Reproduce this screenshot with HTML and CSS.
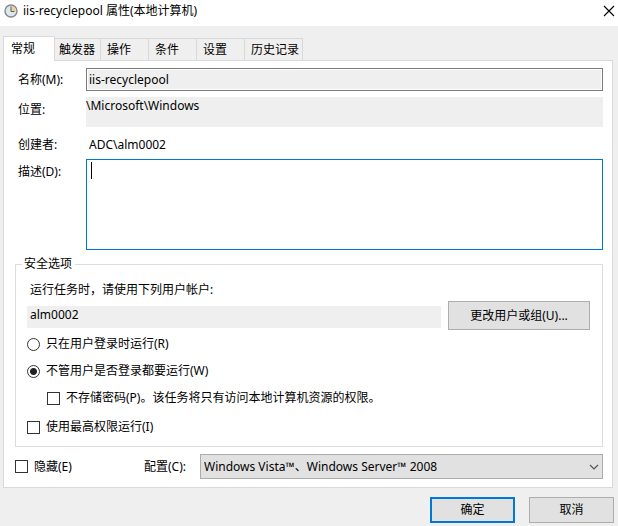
FILE: index.html
```
<!DOCTYPE html>
<html lang="zh-CN">
<head>
    <meta charset="UTF-8">
    <meta name="viewport" content="width=device-width, initial-scale=1.0">
    <title>iis-recyclepool 属性(本地计算机)</title>
    <link rel="stylesheet" href="styles.css">
</head>
<body>
    <header class="titlebar">
        <svg class="clock" width="14" height="14" viewBox="0 0 14 14">
            <circle cx="7" cy="7" r="6" fill="#dce8f0" stroke="#85898d" stroke-width="1.4"/>
            <path d="M7 7V2a5 5 0 0 1 5 5z" fill="#f5cf8c"/>
            <path d="M7 2.5V7.5H10.5" fill="none" stroke="#55606a"/>
        </svg>
        <h1>iis-recyclepool 属性(本地计算机)</h1>
        <button class="close" type="button" aria-label="关闭">
            <svg width="12" height="12" viewBox="0 0 12 12">
                <path d="M1 1L11 11M11 1L1 11" stroke="#000" stroke-width="1.1"/>
            </svg>
        </button>
    </header>

    <form class="dialog">
        <nav class="tabs">
            <button class="tab active" type="button">常规</button>
            <button class="tab" type="button">触发器</button>
            <button class="tab" type="button">操作</button>
            <button class="tab" type="button">条件</button>
            <button class="tab" type="button">设置</button>
            <button class="tab" type="button">历史记录</button>
        </nav>

        <div class="panel">
            <div class="fields">
                <label for="name">名称(M):</label>
                <input class="name" id="name" type="text" value="iis-recyclepool" readonly>

                <label class="top" for="location">位置:</label>
                <output class="location" id="location">\Microsoft\Windows</output>

                <label class="author-label" for="author">创建者:</label>
                <output class="author" id="author">ADC\alm0002</output>

                <label class="top" for="description">描述(D):</label>
                <div class="description">
                    <textarea id="description"></textarea>
                </div>
            </div>

            <fieldset class="security">
                <legend>安全选项</legend>
                <label class="account-label" for="account">运行任务时，请使用下列用户帐户:</label>
                <div class="account-row">
                    <output class="account" id="account">alm0002</output>
                    <button class="btn btn-change" type="button">更改用户或组(U)...</button>
                </div>
                <div class="options">
                    <label class="option"><input type="radio" name="run">只在用户登录时运行(R)</label>
                    <label class="option"><input type="radio" name="run" checked>不管用户是否登录都要运行(W)</label>
                    <label class="option nested"><input type="checkbox">不存储密码(P)。该任务将只有访问本地计算机资源的权限。</label>
                    <label class="option"><input type="checkbox">使用最高权限运行(I)</label>
                </div>
            </fieldset>

            <div class="config">
                <label class="option hidden-task"><input type="checkbox">隐藏(E)</label>
                <label class="config-label" for="config">配置(C):</label>
                <div class="select">
                    <select id="config">
                        <option>Windows Vista™、Windows Server™ 2008</option>
                    </select>
                    <svg class="arrow" width="10" height="6" viewBox="0 0 10 6">
                        <path d="M1 1L5 5L9 1" fill="none" stroke="#555" stroke-width="1.2"/>
                    </svg>
                </div>
            </div>
        </div>

        <footer class="actions">
            <button class="btn btn-default" type="submit">确定</button>
            <button class="btn" type="button">取消</button>
        </footer>
    </form>
</body>
</html>
```
FILE: styles.css
```
* {
    box-sizing: border-box;
}

body {
    margin: 0;
    background-color: #efefef;
    color: #000;
    font-family: "Noto Sans", "Noto Sans CJK SC", sans-serif;
    font-size: 12px;
    line-height: 16px;
}

button, input, textarea, select {
    font: inherit;
    color: inherit;
    margin: 0;
    border-radius: 0;
}

/* Title bar */
.titlebar {
    display: flex;
    align-items: center;
    height: 26px;
    padding: 0 3px 4px 4px;
    background-color: #fff;
}

.titlebar h1 {
    flex: 1;
    margin: 0 0 0 5px;
    font-size: 12px;
    font-weight: normal;
}

.close {
    display: flex;
    padding: 0;
    border: none;
    background: none;
}

/* Tabs */
.dialog {
    padding: 10px 5px 3px 3px;
}

.tabs {
    display: flex;
    align-items: flex-end;
}

.tab {
    height: 22px;
    min-width: 48px;
    padding: 0 3px 0 6px;
    border: 1px solid #d9d9d9;
    border-width: 1px 1px 0 0;
    background-color: #efefef;
    text-align: left;
}

.tab:nth-child(2) {
    min-width: 46px;
    padding-left: 4px;
}

.tab.active {
    position: relative;
    height: 25px;
    min-width: 52px;
    margin-bottom: -1px;
    padding-left: 7px;
    border-left-width: 1px;
    background-color: #fff;
}

.panel {
    padding: 7px 9px 8px 11px;
    border: 1px solid #d9d9d9;
    background-color: #fff;
}

/* General fields */
.fields {
    display: grid;
    grid-template-columns: 68px 1fr;
    row-gap: 6px;
    align-items: center;
    padding-left: 3px;
}

.fields .top {
    align-self: start;
    padding-top: 5px;
}

.name {
    width: 100%;
    height: 23px;
    padding: 0 2px;
    border: 1px solid #7a7a7a;
    outline: none;
    background-color: #efefef;
    box-shadow: inset 0 0 0 1px #fff;
}

.location {
    height: 30px;
    padding-top: 1px;
    background-color: #efefef;
}

.author-label,
.author {
    padding-top: 4px;
}

.author {
    padding-left: 3px;
}

.description {
    position: relative;
}

.description textarea {
    display: block;
    width: 100%;
    height: 91px;
    padding: 2px 4px;
    border: 1px solid #0078d7;
    outline: none;
    resize: none;
    caret-color: transparent;
}

/* Text cursor */
.description::before {
    content: "";
    position: absolute;
    top: 3px;
    left: 5px;
    width: 1px;
    height: 17px;
    background-color: #000;
}

/* Security options */
.security {
    min-width: 0;
    margin: 6px 0 0;
    padding: 10px 12px 11px 11px;
    border: 1px solid #dcdcdc;
}

.security legend {
    margin-left: -5px;
    padding: 0 3px 0 2px;
}

.account-label {
    display: block;
    padding-left: 3px;
}

.account-row {
    display: flex;
    align-items: flex-end;
    gap: 7px;
    margin-top: 3px;
}

.account {
    flex: 1;
    height: 22px;
    margin-bottom: 2px;
    padding: 1px 0 0 3px;
    background-color: #efefef;
}

.options {
    display: flex;
    flex-direction: column;
    align-items: flex-start;
    gap: 11px;
    margin-top: 6px;
}

.option {
    display: flex;
    align-items: center;
    gap: 6px;
}

.option.nested {
    margin-left: 20px;
    margin-bottom: 2px;
}

.option input {
    appearance: none;
    flex: none;
    width: 13px;
    height: 13px;
    border: 1px solid #333;
    background-color: #fff;
}

.option input[type="radio"] {
    border-radius: 50%;
}

.option input[type="radio"]:checked {
    background: radial-gradient(circle, #222 3px, #fff 4px);
}

.config {
    display: flex;
    align-items: center;
    margin-top: 7px;
}

.hidden-task {
    width: 129px;
}

.config-label {
    width: 56px;
}

.select {
    flex: 1;
    position: relative;
}

.select select {
    appearance: none;
    display: block;
    width: 100%;
    height: 25px;
    padding: 0 20px 0 3px;
    border: 1px solid #adadad;
    background-color: #e1e1e1;
}

.arrow {
    position: absolute;
    top: 10px;
    right: 4px;
    pointer-events: none;
}

/* Buttons */
.btn {
    width: 85px;
    height: 26px;
    padding: 0;
    border: 1px solid #adadad;
    background-color: #e1e1e1;
}

.btn-change {
    width: 142px;
    height: 29px;
}

.btn-default {
    border: 2px solid #0078d7;
}

.actions {
    display: flex;
    justify-content: flex-end;
    gap: 14px;
    margin: 9px -1px 0 0;
}
```
